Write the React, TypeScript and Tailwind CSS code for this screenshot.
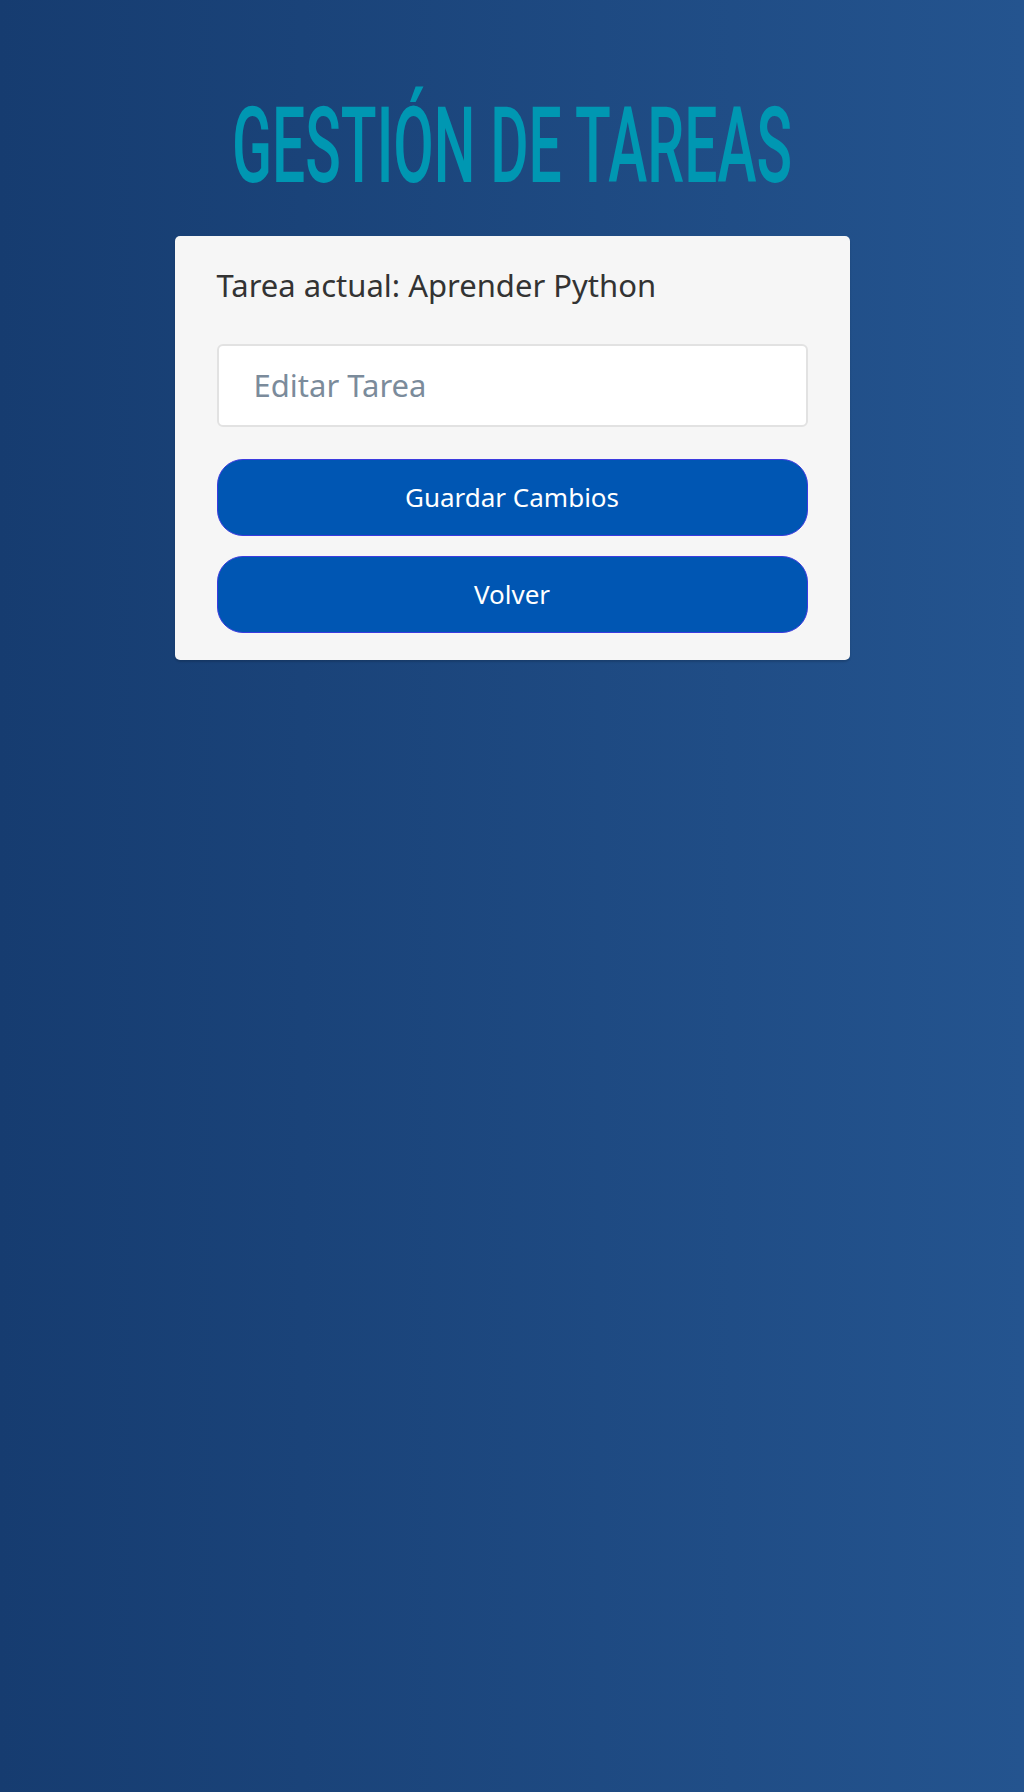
export default function App() {
  return (
    <div className="min-h-[1792px] w-full bg-gradient-to-r from-[#163c70] to-[#24548f]">
      {/* Title - condensed look via horizontal scale */}
      <h1 className="pt-[94px] text-center text-[105px] leading-none font-medium text-[#0097b2] font-['Roboto',sans-serif]">
        <span className="inline-block scale-x-[0.56]">GESTIÓN DE TAREAS</span>
      </h1>

      {/* Edit card */}
      <div className="mx-auto mt-[37px] w-[675px] rounded-[5px] bg-[#f6f6f6] px-[42px] pt-[26px] pb-[27px] shadow-[0_2px_2px_rgba(0,0,0,0.15)] font-['Noto_Sans',sans-serif]">
        <p className="text-[31px] text-[#333333]">Tarea actual: Aprender Python</p>
        <input
          type="text"
          placeholder="Editar Tarea"
          className="mt-[35px] block h-[83px] w-full rounded-md border-2 border-[#e2e2e2] bg-white px-[35px] text-[31px] outline-none placeholder:text-[#7b8b9b]"
        />
        <button className="mt-[32px] block h-[77px] w-full rounded-[26px] border border-[#3b3bdf] bg-[#0056b3] text-[26px] text-white">
          Guardar Cambios
        </button>
        <button className="mt-[20px] block h-[77px] w-full rounded-[26px] border border-[#3b3bdf] bg-[#0056b3] text-[26px] text-white">
          Volver
        </button>
      </div>
    </div>
  );
}
